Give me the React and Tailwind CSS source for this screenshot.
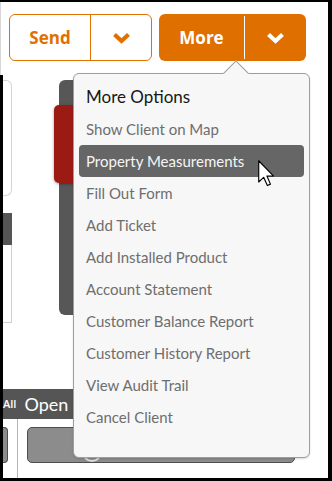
import React from 'react';

const items = [
    'Show Client on Map',
    'Property Measurements',
    'Fill Out Form',
    'Add Ticket',
    'Add Installed Product',
    'Account Statement',
    'Customer Balance Report',
    'Customer History Report',
    'View Audit Trail',
    'Cancel Client',
];

const Chevron = () => (
    <svg width="19" height="12" viewBox="0 0 19 12" fill="none">
        <path d="M2.5 2.5 L9.5 9 L16.5 2.5" stroke="currentColor" strokeWidth="4.2" strokeLinejoin="miter" strokeLinecap="butt" />
    </svg>
);

const Cursor = () => (
    <svg width="17" height="27" viewBox="0 0 12 19" className="absolute left-[258px] top-[158px]">
        <path d="M0.5 0.5 L0.5 15.5 L4 12.2 L6.6 18 L8.8 17 L6.3 11.3 L11 11.3 Z" fill="white" stroke="black" strokeWidth="0.8" strokeLinejoin="round" />
    </svg>
);

const MoreMenu = () => (
    <div className="absolute left-[73px] top-[71px] w-[237px] h-[385px] bg-[#f7f7f7] border border-[#9e9e9e] rounded-[6px] px-[5px] pt-[7px] font-['Lato',sans-serif] shadow-[0_1px_2px_rgba(0,0,0,0.15)]">
        <div className="absolute left-[153px] -top-[10px] w-[18px] h-[18px] rotate-45 bg-[#f7f7f7] border-t border-l border-[#9e9e9e]" />
        <div className="relative h-[32px] flex items-center px-[7px] text-[17px] text-[#161616]">More Options</div>
        {items.map((label) => (
            <div
                key={label}
                className={`relative h-[32px] flex items-center px-[7px] text-[15px] rounded-[4px] ${
                    label === 'Property Measurements' ? 'bg-[#666666] text-[#f5f5f5]' : 'text-[#6e6e6e]'
                }`}
            >
                {label}
            </div>
        ))}
    </div>
);

export default function App() {
    return (
        <div className="relative w-[332px] h-[481px] bg-white border-t-2 border-r-4 border-b-[3px] border-black flex overflow-hidden font-['Open_Sans',sans-serif]">
            {/* left edge */}
            <div className="w-[3px] flex flex-col shrink-0">
                <div className="h-[73px] bg-[#d6d6d6] w-[1px]" />
                <div className="flex-1 bg-black" />
            </div>

            <div className="flex-1 flex flex-col">
                {/* action buttons */}
                <div className="flex gap-[7px] pt-[12px] pl-[6px]">
                    <div className="w-[143px] h-[47px] flex rounded-[6px] border border-[#e07000] text-[#e07000]">
                        <div className="w-[81px] flex items-center justify-center border-r border-[#e07000] text-[17px] font-bold">Send</div>
                        <div className="flex-1 flex items-center justify-center">
                            <Chevron />
                        </div>
                    </div>
                    <div className="w-[147px] h-[47px] flex rounded-[6px] bg-[#df7000] text-white py-[2px]">
                        <div className="w-[86px] flex items-center justify-center border-r border-white text-[17px] font-bold">More</div>
                        <div className="flex-1 flex items-center justify-center">
                            <Chevron />
                        </div>
                    </div>
                </div>

                {/* content behind menu */}
                <div className="flex pt-[19px] h-[309px]">
                    <div className="w-[9px] flex flex-col">
                        <div className="h-[116px] border border-l-0 border-[#d4d4d4] rounded-r-[6px] bg-white" />
                        <div className="h-[32px] mt-[17px] bg-[#555555]" />
                        <div className="h-[78px] border-r border-b border-[#cfcfcf]" />
                    </div>
                    <div className="ml-[47px] w-[200px] h-[235px] bg-[#575757] rounded-l-[6px] relative">
                        <div className="absolute -left-[5px] top-[25px] w-[30px] h-[78px] bg-[#9c1a14] rounded-l-[5px] shadow-[0_1px_3px_rgba(0,0,0,0.4)]" />
                    </div>
                </div>

                <div className="h-[30px] mt-[19px] bg-[#555555] flex items-center text-white gap-[8px] w-[300px]">
                    <span className="text-[11px] font-semibold">All</span>
                    <span className="text-[18px] font-['Lato',sans-serif]">Open</span>
                </div>
                <div className="flex flex-1">
                    <div className="w-[5px] mt-[8px] h-[36px] bg-[#8c8c8c] border border-l-0 border-[#4d4d4d] rounded-r-[4px]" />
                    <div className="ml-[9px] w-px bg-[#b5b5b5]" />
                    <div className="ml-[9px] mt-[8px] w-[268px] h-[36px] bg-[#8c8c8c] border border-[#4d4d4d] rounded-[5px] flex items-center pl-[54px]">
                        <div className="w-[20px] h-[20px] rounded-full border-2 border-[#dcdcdc] mt-[14px]" />
                    </div>
                </div>
            </div>

            <MoreMenu />
            <Cursor />
        </div>
    );
}
